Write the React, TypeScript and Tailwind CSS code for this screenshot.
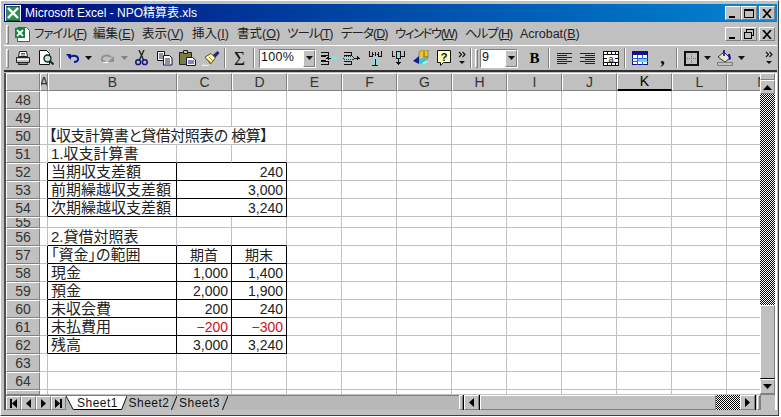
import type { ReactNode } from "react";

const raised = "border border-t-white border-l-white border-r-[#808080] border-b-[#808080]";
const sunken = "border border-t-[#808080] border-l-[#808080] border-r-white border-b-white";
const checker = "bg-[repeating-conic-gradient(#000_0_25%,#fff_0_50%)] bg-[length:2px_2px]";

type Row = {
  n: number;
  h: number;
  b?: string;
  c?: string;
  d?: string;
  kind?: "merged" | "box" | "above" | "title";
  center?: boolean;
  red?: boolean;
};

const rows: Row[] = [
  { n: 48, h: 18 },
  { n: 49, h: 18 },
  { n: 50, h: 18, b: "【収支計算書と貸借対照表の 検算】", kind: "title" },
  { n: 51, h: 18, b: "1.収支計算書", kind: "above" },
  { n: 52, h: 18, b: "当期収支差額", d: "240", kind: "merged" },
  { n: 53, h: 18, b: "前期繰越収支差額", d: "3,000", kind: "merged" },
  { n: 54, h: 18, b: "次期繰越収支差額", d: "3,240", kind: "merged" },
  { n: 55, h: 11 },
  { n: 56, h: 18, b: "2.貸借対照表", kind: "above" },
  { n: 57, h: 18, b: "「資金」の範囲", c: "期首", d: "期末", kind: "box", center: true },
  { n: 58, h: 18, b: "現金", c: "1,000", d: "1,400", kind: "box" },
  { n: 59, h: 18, b: "預金", c: "2,000", d: "1,900", kind: "box" },
  { n: 60, h: 18, b: "未収会費", c: "200", d: "240", kind: "box" },
  { n: 61, h: 18, b: "未払費用", c: "−200", d: "−300", kind: "box", red: true },
  { n: 62, h: 18, b: "残高", c: "3,000", d: "3,240", kind: "box" },
  { n: 63, h: 18 },
  { n: 64, h: 18 },
  { n: 65, h: 5 },
];

const emptyCols = ["E", "F", "G", "H", "I", "J", "K", "L", "M"];

const menus = [
  { label: "ファイル", key: "F", w: "w-[59px] tracking-[-1px]" },
  { label: "編集", key: "E", w: "w-[49px]" },
  { label: "表示", key: "V", w: "w-[50px]" },
  { label: "挿入", key: "I", w: "w-[45px]" },
  { label: "書式", key: "O", w: "w-[50px]" },
  { label: "ツール", key: "T", w: "w-[54px] tracking-[-1px]" },
  { label: "データ", key: "D", w: "w-[54px] tracking-[-1px]" },
  { label: "ウィンドウ", key: "W", w: "w-[70px] tracking-[-1.5px]" },
  { label: "ヘルプ", key: "H", w: "w-[55px] tracking-[-1px]" },
  { label: "Acrobat", key: "B", w: "w-[62px]" },
];

function Sheet({ children }: { children: ReactNode }) {
  return (
    <svg width="16" height="16" viewBox="0 0 16 16">
      {children}
    </svg>
  );
}

function ExcelMark() {
  return (
    <svg width="16" height="16" viewBox="0 0 16 16" shapeRendering="crispEdges">
      <rect x="0" y="0" width="16" height="16" fill="#fff" />
      <rect x="1" y="1" width="14" height="14" fill="#2e8b57" />
      <path d="M3 3l10 10M13 3L3 13" stroke="#fff" strokeWidth="2.4" shapeRendering="auto" />
      <path d="M1 1h14M1 15h14" stroke="#0b5d36" />
    </svg>
  );
}

function MenuExcel() {
  return (
    <svg width="17" height="16" viewBox="0 0 17 16">
      <path d="M3.5 1.5h9l3 3v11h-12z" fill="#fff" stroke="#555" />
      <rect x="1" y="2" width="10" height="10" fill="#14803c" />
      <path d="M3 4l6 6M9 4l-6 6" stroke="#fff" strokeWidth="1.8" />
    </svg>
  );
}

const PrintIcon = () => (
  <Sheet>
    <path d="M4.5 1.5h7l1 5h-9z" fill="#fff" stroke="#222" />
    <path d="M1.5 7.5h13v5h-13z" fill="#c0c0c0" stroke="#222" />
    <path d="M3.5 12.5h9v2h-9z" fill="#808080" stroke="#222" />
    <path d="M2 9.5h12" stroke="#fff" />
    <path d="M6 3.5h4M6 5h4" stroke="#666" />
  </Sheet>
);

const PreviewIcon = () => (
  <Sheet>
    <path d="M1.5.5h7l3 3v11h-10z" fill="#fff" stroke="#111" />
    <circle cx="9.5" cy="8.5" r="3.5" fill="#bfe6ea" stroke="#222" strokeWidth="1.4" />
    <path d="M12 11l3.5 3.5" stroke="#222" strokeWidth="2" />
  </Sheet>
);

const UndoIcon = ({ color }: { color: string }) => (
  <svg width="14" height="10" viewBox="0 0 14 10">
    <path d="M3 5c2-3 8-3 9 0s-2 4-4 4" fill="none" stroke={color} strokeWidth="2" />
    <path d="M0 1h5v6z" fill={color} />
  </svg>
);

const RedoIcon = () => (
  <svg width="14" height="10" viewBox="0 0 14 10">
    <path d="M11 4c-3-2-8-2-9 1s2 4 4 4" fill="none" stroke="#909090" strokeWidth="2" />
    <path d="M14 3v6H8z" fill="#909090" />
    <path d="M3 9.5h5" stroke="#fff" />
  </svg>
);

const CutIcon = () => (
  <Sheet>
    <path d="M5 0l4.6 10M10 0L5.4 10" stroke="#222" strokeWidth="1.4" />
    <circle cx="4.2" cy="12.2" r="2.4" fill="none" stroke="#101880" strokeWidth="1.5" />
    <circle cx="10.8" cy="12.2" r="2.4" fill="none" stroke="#101880" strokeWidth="1.5" />
  </Sheet>
);

const CopyIcon = () => (
  <Sheet>
    <path d="M.5 1.5h7v9h-7z" fill="#fff" stroke="#101018" />
    <path d="M2 4h4M2 6h4M2 8h4" stroke="#223" />
    <path d="M6.5 5.5h6l2.5 2.5v7h-8.5z" fill="#fff" stroke="#101040" />
    <path d="M8 9h5M8 11h5M8 13h5" stroke="#223" />
  </Sheet>
);

const PasteIcon = () => (
  <svg width="17" height="16" viewBox="0 0 17 16">
    <path d="M.5 2.5h12v12H.5z" fill="#7c7c3c" stroke="#222" />
    <path d="M4.5.5h4v3h-4z" fill="#c0c0c0" stroke="#222" />
    <path d="M7.5 7.5h6l3 2.5v5.5h-9z" fill="#fff" stroke="#101060" />
    <path d="M9 11h6M9 13h6" stroke="#101060" />
  </svg>
);

const BrushIcon = () => (
  <svg width="18" height="16" viewBox="0 0 18 16">
    <path d="M10.5 5.5l5-4.5 2 2-4.5 5z" fill="#1c2a78" />
    <path d="M3 7l6-3.5 4.5 4.5L8.5 14z" fill="#fff6a8" stroke="#54502c" />
    <path d="M5 9l4 4M7 7l4 4" stroke="#9c9440" />
    <path d="M0 15.5h7" stroke="#fff8a0" strokeWidth="1.4" />
  </svg>
);

const Cell2 = ({ flip }: { flip?: boolean }) => (
  <svg width="17" height="14" viewBox="0 0 17 14" shapeRendering="crispEdges">
    <path d="M.5 1h8v3h-8M.5 10h8v3h-8" fill="none" stroke="#111" />
    {flip ? (
      <>
        <rect x="0.5" y="5.5" width="10" height="3" fill="#8fdcdc" stroke="#333" strokeDasharray="1 1" />
        <path d="M11 7h3M14 5v4M15 6v2M16 7h1" stroke="#111" />
      </>
    ) : (
      <>
        <path d="M.5 5h5M.5 9h5" stroke="#111" />
        <rect x="12" y="5" width="5" height="4" fill="#8fdcdc" />
        <path d="M8 7h3M8 5v4M7 6v2M6 7h1" stroke="#111" />
      </>
    )}
  </svg>
);

const RowDel = () => (
  <svg width="14" height="15" viewBox="0 0 14 15" shapeRendering="crispEdges">
    <path d="M1 0v5h3V1M10 1v4h3V0" fill="none" stroke="#111" />
    <rect x="5" y="6" width="4" height="9" fill="#8fdcdc" />
    <path d="M7 1v4M5 3v1M9 3v1M4 14h6M7 8v6" stroke="#111" />
  </svg>
);

const RowAdd = () => (
  <svg width="14" height="15" viewBox="0 0 14 15" shapeRendering="crispEdges">
    <path d="M1 0v5h3M10 5h3V0" fill="none" stroke="#111" />
    <rect x="5" y="0" width="4" height="7" fill="#8fdcdc" stroke="#111" />
    <path d="M7 7v7M5 11h5M6 12h3" stroke="#111" />
  </svg>
);

const CubeIcon = () => (
  <Sheet>
    <path d="M6 2l3-2h6v8l-5 4H6z" fill="#e8c838" stroke="#555" strokeWidth=".6" />
    <path d="M11 1v6h4" stroke="#7a6a10" fill="none" />
    <path d="M0 11l6-5v8z" fill="#10208c" />
    <path d="M6 10l5-3 4 3-4 5-5-2z" fill="#30c8d8" />
    <path d="M9 13l5-3 1 2-5 3z" fill="#b8e8e8" />
  </Sheet>
);

const HelpIcon = () => (
  <Sheet>
    <path d="M1.5.5h13v12h-7l-3 3v-3h-3z" fill="#ffffc0" stroke="#111" />
    <text x="8" y="10.5" textAnchor="middle" fontSize="11" fontWeight="700" fontFamily="'Liberation Sans'" fill="#111">?</text>
  </Sheet>
);

const More = () => (
  <svg width="8" height="15" viewBox="0 0 8 15">
    <path d="M1 1l2.5 2.5L1 6M4.5 1L7 3.5 4.5 6" fill="none" stroke="#111" strokeWidth="1.1" />
    <path d="M1 10h6l-3 3z" fill="#111" />
  </svg>
);

const Caret = ({ color = "#111" }: { color?: string }) => (
  <svg width="7" height="4" viewBox="0 0 7 4">
    <path d="M0 0h7L3.5 4z" fill={color} />
  </svg>
);

const AlignIcon = ({ right }: { right?: boolean }) => (
  <svg width="15" height="13" viewBox="0 0 15 13" shapeRendering="crispEdges">
    <path
      d={right ? "M0 1h15M5 3h10M0 5h15M5 7h10M0 9h15M5 11h10" : "M0 1h15M0 3h10M0 5h15M0 7h10M0 9h15M0 11h10"}
      stroke="#222"
    />
  </svg>
);

const MergeIcon = () => (
  <svg width="16" height="15" viewBox="0 0 16 15" shapeRendering="crispEdges">
    <rect x=".5" y=".5" width="15" height="14" fill="#fff" stroke="#111" />
    <path d="M0 3.5h16M0 11.5h16M8 0v3M8 12v3M4 0v3M12 0v3M4 12v3M12 12v3" stroke="#111" />
    <path d="M1 7.5h3M12 7.5h3" stroke="#111" />
    <text x="8" y="10.5" textAnchor="middle" fontSize="9" fontFamily="'Liberation Sans'" fill="#111">a</text>
  </svg>
);

const TableIcon = () => (
  <svg width="16" height="14" viewBox="0 0 16 14" shapeRendering="crispEdges">
    <rect x=".5" y=".5" width="15" height="13" fill="#fff" stroke="#10108c" />
    <rect x="1" y="1" width="14" height="3" fill="#10108c" />
    <path d="M5.5 4v10M10.5 4v10M0 7h16M0 10.5h16" stroke="#2060e0" />
    <rect x="6" y="7.5" width="9" height="3" fill="#70d0f0" />
  </svg>
);

const BorderIcon = () => (
  <svg width="15" height="15" viewBox="0 0 15 15" shapeRendering="crispEdges">
    <rect x="1" y="1" width="13" height="13" fill="none" stroke="#111" strokeWidth="2" />
    <path d="M7.5 3v9M3 7.5h9" stroke="#777" strokeDasharray="1 1" />
  </svg>
);

const FillIcon = () => (
  <svg width="16" height="16" viewBox="0 0 16 16">
    <path d="M1 7l6-5 6 6-5 4z" fill="#e8e8d8" stroke="#333" />
    <path d="M7 0v6" stroke="#10108c" strokeWidth="1.6" />
    <path d="M11 4h2l1 5-2 1z" fill="#10108c" />
    <rect x=".5" y="12.5" width="15" height="3" fill="#c0c0c0" stroke="#808080" />
  </svg>
);

function Tool({ w = "w-[23px]", children }: { w?: string; children: ReactNode }) {
  return <div className={`flex h-full shrink-0 items-center justify-center ${w}`}>{children}</div>;
}

function Sep() {
  return (
    <div className="mx-[2px] h-[20px] w-[2px] shrink-0 border-l border-r border-l-[#808080] border-r-white" />
  );
}

function Grip() {
  return <div className={`h-[19px] w-[3px] shrink-0 ${raised}`} />;
}

function Combo({ value, w }: { value: string; w: string }) {
  return (
    <div className={`flex h-[19px] shrink-0 items-stretch bg-white ${sunken} ${w}`}>
      <span className="flex-1 pl-[1px] text-[12.5px] leading-[15px] tracking-[0.3px] text-[#111]">{value}</span>
      <span className={`flex w-[12px] items-center justify-center bg-[#c0c0c0] ${raised}`}>
        <Caret />
      </span>
    </div>
  );
}

function CtlButton({ children }: { children: ReactNode }) {
  return (
    <div className={`flex h-[14px] w-[16px] shrink-0 items-center justify-center bg-[#c0c0c0] ${raised}`}>
      {children}
    </div>
  );
}

const MinGlyph = () => (
  <svg width="10" height="9" viewBox="0 0 10 9" shapeRendering="crispEdges">
    <rect x="1" y="7" width="6" height="2" fill="#000" />
  </svg>
);
const MaxGlyph = () => (
  <svg width="10" height="9" viewBox="0 0 10 9" shapeRendering="crispEdges">
    <path d="M.5 1.5h9v7h-9z" fill="none" stroke="#000" />
    <path d="M0 .5h10" stroke="#000" />
  </svg>
);
const RestoreGlyph = () => (
  <svg width="10" height="10" viewBox="0 0 10 10" shapeRendering="crispEdges">
    <path d="M2.5 2.5v-2h7v6h-2" fill="none" stroke="#000" />
    <path d="M.5 3.5h7v6h-7z" fill="#c0c0c0" stroke="#000" />
    <path d="M2 .5h8M0 3.5h8" stroke="#000" />
  </svg>
);
const CloseGlyph = () => (
  <svg width="10" height="9" viewBox="0 0 10 9">
    <path d="M1 0l8 9M9 0L1 9" stroke="#000" strokeWidth="1.7" />
  </svg>
);

function ColHead({ label, w, active }: { label: string; w: string; active?: boolean }) {
  return (
    <div
      className={`flex h-full shrink-0 items-center justify-center overflow-hidden bg-[#c0c0c0] text-[14px] ${w} ${
        active
          ? "border-b-2 border-l border-r border-t border-b-black border-l-white border-r-[#808080] border-t-white font-medium text-black"
          : `${raised} text-[#333]`
      }`}
    >
      {label}
    </div>
  );
}

function GridRow({ row }: { row: Row }) {
  const boxed = row.kind === "box" || row.kind === "merged";
  const bottom = boxed || row.kind === "above" ? "border-b-black" : "border-b-[#c0c0c0]";
  const right = boxed ? "border-r-black" : "border-r-[#c0c0c0]";
  const text = row.red ? "text-[#d01020]" : "text-[#222]";
  return (
    <div className="flex shrink-0" style={{ height: row.h }}>
      <div
        className={`flex w-[34px] shrink-0 justify-center overflow-hidden bg-[#c0c0c0] text-[14px] text-[#333] ${raised} ${
          row.h < 18 ? "items-end leading-[9px]" : "items-center pt-[1px]"
        }`}
      >
        {row.h > 6 ? row.n : null}
      </div>
      <div className={`w-[8px] shrink-0 border-b border-r border-b-[#c0c0c0] ${right}`} />
      {row.kind === "title" ? (
        <div className="flex w-[239px] shrink-0 items-center whitespace-nowrap border-b border-r border-b-[#c0c0c0] border-r-[#c0c0c0] pl-[1px] pt-[1px] text-[15px] tracking-[-0.5px] text-[#222]">
          {row.b}
        </div>
      ) : (
        <>
          <div className={`flex w-[129px] shrink-0 items-center whitespace-nowrap border-b border-r pl-[3px] pt-[1px] text-[15px] text-[#222] ${bottom} ${right}`}>
            {row.b}
          </div>
          {row.kind === "merged" ? (
            <div className={`flex w-[110px] shrink-0 items-center justify-end border-b border-r pr-[3px] pt-[1px] text-[14px] ${text} ${bottom} ${right}`}>
              {row.d}
            </div>
          ) : (
            <>
              <div className={`flex w-[55px] shrink-0 items-center border-b border-r pt-[1px] text-[14px] ${row.center ? "justify-center text-[14.5px]" : "justify-end pr-[3px]"} ${text} ${bottom} ${right}`}>
                {row.c}
              </div>
              <div className={`flex w-[55px] shrink-0 items-center border-b border-r pt-[1px] text-[14px] ${row.center ? "justify-center text-[14.5px]" : "justify-end pr-[3px]"} ${text} ${bottom} ${right}`}>
                {row.d}
              </div>
            </>
          )}
        </>
      )}
      {emptyCols.map((c) => (
        <div key={c} className="w-[55px] shrink-0 border-b border-r border-b-[#c0c0c0] border-r-[#c0c0c0]" />
      ))}
    </div>
  );
}

function Arrow({ dir }: { dir: "up" | "down" | "left" | "right" }) {
  const d = {
    up: "M0 5h9L4.5 0z",
    down: "M0 0h9L4.5 5z",
    left: "M5 0v9L0 4.5z",
    right: "M0 0v9L5 4.5z",
  }[dir];
  const vertical = dir === "up" || dir === "down";
  return (
    <svg width={vertical ? 9 : 5} height={vertical ? 5 : 9} viewBox={vertical ? "0 0 9 5" : "0 0 5 9"}>
      <path d={d} fill="#000" />
    </svg>
  );
}

function NavButton({ children }: { children: ReactNode }) {
  return (
    <div className={`flex h-[14px] w-[15px] shrink-0 items-center justify-center bg-[#c0c0c0] ${raised}`}>
      {children}
    </div>
  );
}

function TabSlant({ active, flip, w }: { active?: boolean; flip?: boolean; w: number }) {
  return (
    <svg width={w} height="15" viewBox={`0 0 ${w} 15`} className="shrink-0">
      {active && (
        <path d={flip ? `M0 0L${w} 0L0 15z` : `M0 0L${w} 0L${w} 15z`} fill="#fff" />
      )}
      <path d={flip ? `M${w} 0L0 15` : `M0 0L${w} 15`} stroke="#111" fill="none" />
    </svg>
  );
}

function Tabs() {
  return (
    <div className="flex h-full w-[393px] shrink-0 items-stretch border-t border-t-[#808080] bg-[#b8b8b8] text-[12px] tracking-[0.5px] text-[#111]">
      <TabSlant active w={8} />
      <div className="flex w-[47px] shrink-0 items-center justify-center border-b border-b-black bg-white">
        Sheet1
      </div>
      <TabSlant active flip w={6} />
      <div className="flex w-[44px] shrink-0 items-center justify-center bg-[#c0c0c0]">Sheet2</div>
      <TabSlant flip w={6} />
      <div className="flex w-[45px] shrink-0 items-center justify-center bg-[#c0c0c0]">Sheet3</div>
      <TabSlant flip w={6} />
    </div>
  );
}

export default function App() {
  return (
    <div className="h-[417px] w-[781px] overflow-hidden bg-white">
      <div className="flex h-[416px] w-[779px] flex-col overflow-hidden border-b border-l border-r border-t border-b-[#404040] border-l-white border-r-[#404040] border-t-white bg-[#c0c0c0] pb-[4px] pl-[3px] pr-[1px] pt-[3px] font-['Liberation_Sans','Noto_Sans_CJK_JP',sans-serif] [font-feature-settings:'palt']">
        {/* title bar */}
        <div className="flex h-[18px] shrink-0 items-center bg-gradient-to-r from-[#000080] to-[#1084d0] pl-[1px] pr-[2px]">
          <ExcelMark />
          <span className="ml-[4px] flex-1 text-[12px] text-white">Microsoft Excel - NPO精算表.xls</span>
          <CtlButton><MinGlyph /></CtlButton>
          <CtlButton><MaxGlyph /></CtlButton>
          <div className="w-[2px]" />
          <CtlButton><CloseGlyph /></CtlButton>
        </div>

        {/* menu bar */}
        <div className="mt-[1px] flex h-[22px] shrink-0 items-center px-[2px] text-[12.5px] text-[#222]">
          <Grip />
          <div className="flex w-[25px] shrink-0 justify-center pl-[1px]">
            <MenuExcel />
          </div>
          {menus.map((m) => (
            <div key={m.key + m.label} className={`shrink-0 whitespace-nowrap ${m.w}`}>
              {m.label}(<u>{m.key}</u>)
            </div>
          ))}
          <div className="flex-1" />
          <CtlButton><MinGlyph /></CtlButton>
          <CtlButton><RestoreGlyph /></CtlButton>
          <div className="w-[2px]" />
          <CtlButton><CloseGlyph /></CtlButton>
        </div>

        {/* toolbar */}
        <div className="flex h-[25px] shrink-0 items-center border-t border-t-white pl-[2px] pr-[2px]">
          <Grip />
          <div className="w-[2px]" />
          <Tool><PrintIcon /></Tool>
          <Tool><PreviewIcon /></Tool>
          <Sep />
          <Tool w="w-[19px]"><UndoIcon color="#101890" /></Tool>
          <Tool w="w-[13px]"><Caret /></Tool>
          <Tool w="w-[24px]"><RedoIcon /></Tool>
          <Tool w="w-[11px]"><Caret color="#808080" /></Tool>
          <Tool><CutIcon /></Tool>
          <Tool><CopyIcon /></Tool>
          <Tool><PasteIcon /></Tool>
          <Tool><BrushIcon /></Tool>
          <Sep />
          <Tool><span className="font-['Liberation_Serif',serif] text-[19px] leading-none text-[#111]">Σ</span></Tool>
          <Sep />
          <div className="w-[2px]" />
          <Combo value="100%" w="w-[57px]" />
          <div className="w-[1px]" />
          <Tool><Cell2 /></Tool>
          <Tool><Cell2 flip /></Tool>
          <Tool><RowDel /></Tool>
          <Tool><RowAdd /></Tool>
          <Tool><CubeIcon /></Tool>
          <Tool><HelpIcon /></Tool>
          <Tool w="w-[13px]"><More /></Tool>
          <Sep />
          <div className="w-[1px]" />
          <Grip />
          <div className="w-[2px]" />
          <Combo value="9" w="w-[38px]" />
          <div className="w-[5px]" />
          <Tool><span className="font-['Liberation_Serif',serif] text-[15px] font-bold text-black">B</span></Tool>
          <Sep />
          <div className="w-[1px]" />
          <Tool><AlignIcon /></Tool>
          <Tool><AlignIcon right /></Tool>
          <Tool><MergeIcon /></Tool>
          <Sep />
          <Tool><TableIcon /></Tool>
          <Tool><span className="font-['Liberation_Serif',serif] text-[18px] font-bold leading-none text-black">,</span></Tool>
          <Sep />
          <Tool><BorderIcon /></Tool>
          <Tool w="w-[9px]"><Caret /></Tool>
          <div className="w-[1px]" />
          <Tool w="w-[24px]"><FillIcon /></Tool>
          <Tool w="w-[9px]"><Caret /></Tool>
          <div className="flex-1" />
          <Tool w="w-[13px]"><More /></Tool>
        </div>

        <div className="h-[3px] shrink-0 border-t-2 border-t-[#303030] bg-[#c0c0c0]" />

        {/* sheet area */}
        <div className="flex h-[337px] shrink-0 border-l-2 border-l-[#505050] bg-white">
          <div className="flex w-[754px] shrink-0 flex-col overflow-hidden">
            <div className="flex h-[18px] shrink-0">
              <ColHead label="" w="w-[34px]" />
              <ColHead label="A" w="w-[8px]" />
              <ColHead label="B" w="w-[129px]" />
              <ColHead label="C" w="w-[55px]" />
              <ColHead label="D" w="w-[55px]" />
              {emptyCols.map((c) => (
                <ColHead key={c} label={c} w={c === "M" ? "w-[72px]" : "w-[55px]"} active={c === "K"} />
              ))}
            </div>
            <div className="h-[304px] shrink-0 overflow-hidden">
              {rows.map((r) => (
                <GridRow key={r.n} row={r} />
              ))}
            </div>
            {/* tabs and horizontal scrollbar */}
            <div className="flex h-[15px] shrink-0 items-stretch bg-[#c0c0c0]">
              <div className="flex shrink-0 items-center border-t border-t-[#808080]">
                <NavButton><svg width="7" height="9" viewBox="0 0 7 9"><path d="M0 0h2v9H0zM7 0v9L2 4.5z" /></svg></NavButton>
                <NavButton><Arrow dir="left" /></NavButton>
                <NavButton><Arrow dir="right" /></NavButton>
                <NavButton><svg width="7" height="9" viewBox="0 0 7 9"><path d="M5 0h2v9H5zM0 0v9l5-4.5z" /></svg></NavButton>
              </div>
              <Tabs />
              <div className={`h-full w-[4px] shrink-0 ${raised}`} />
              <div className="w-[1px] shrink-0 bg-black" />
              <div className={`flex h-full w-[15px] shrink-0 items-center justify-center ${raised}`}>
                <Arrow dir="left" />
              </div>
              <div className="w-[1px] shrink-0 bg-black" />
              <div className={`h-full w-[236px] shrink-0 ${raised} border-b-[#404040]`} />
              <div className={`h-full w-[24px] shrink-0 ${checker}`} />
              <div className={`flex h-full w-[15px] shrink-0 items-center justify-center ${raised}`}>
                <Arrow dir="right" />
              </div>
              <div className="w-[1px] shrink-0 bg-black" />
              <div className="w-[1px] shrink-0" />
              <div className={`h-full w-[3px] shrink-0 ${raised}`} />
            </div>
          </div>

          {/* vertical scrollbar */}
          <div className="flex w-[15px] shrink-0 flex-col bg-[#c0c0c0]">
            <div className={`h-[7px] shrink-0 ${raised}`} />
            <div className={`flex h-[14px] shrink-0 items-center justify-center ${raised}`}>
              <Arrow dir="up" />
            </div>
            <div className={`h-[211px] shrink-0 ${checker}`} />
            <div className={`h-[74px] shrink-0 ${raised} border-b-black`} />
            <div className={`flex h-[15px] shrink-0 items-center justify-center ${raised}`}>
              <Arrow dir="down" />
            </div>
            <div className="flex-1 border-l border-t border-l-[#808080] border-t-[#808080]" />
          </div>
        </div>
      </div>
    </div>
  );
}
